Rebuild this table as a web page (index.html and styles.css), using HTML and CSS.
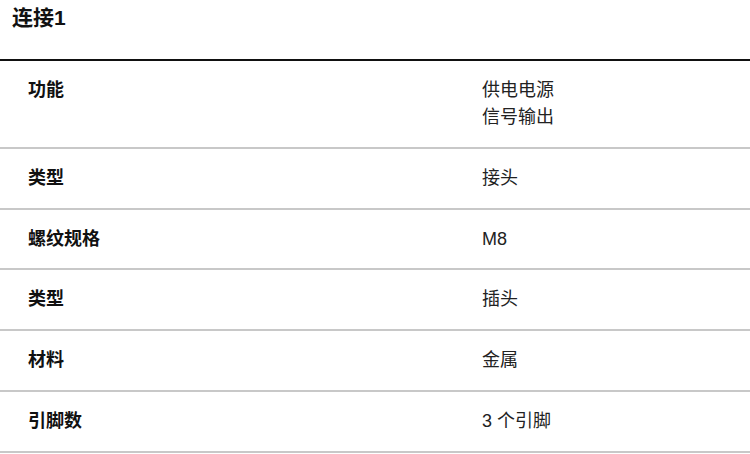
FILE: index.html
```html
<!DOCTYPE html>
<html lang="zh-CN">
<head>
<meta charset="utf-8">
<link rel="stylesheet" href="styles.css">
</head>
<body>
  <h2 class="title">连接1</h2>
  <div class="spec">
    <div class="row">
      <div class="label">功能</div>
      <div class="value">供电电源<br>信号输出</div>
    </div>
    <div class="row">
      <div class="label">类型</div>
      <div class="value">接头</div>
    </div>
    <div class="row">
      <div class="label">螺纹规格</div>
      <div class="value">M8</div>
    </div>
    <div class="row">
      <div class="label">类型</div>
      <div class="value">插头</div>
    </div>
    <div class="row">
      <div class="label">材料</div>
      <div class="value">金属</div>
    </div>
    <div class="row">
      <div class="label">引脚数</div>
      <div class="value">3 个引脚</div>
    </div>
  </div>
</body>
</html>
```

FILE: styles.css
```css
html, body {
  margin: 0;
  padding: 0;
  background: #fff;
}
body {
  font-family: "Liberation Sans", "Noto Sans CJK SC", sans-serif;
  color: #1a1a1a;
}
.title {
  margin: 0;
  height: 59px;
  box-sizing: border-box;
  padding: 4px 12px 0;
  font-size: 21px;
  line-height: 28px;
  font-weight: 700;
  color: #111;
}
.spec {
  border-top: 2px solid #111;
}
.row {
  display: grid;
  grid-template-columns: 454px 1fr;
  padding: 16px 0 16px 28px;
  border-bottom: 2px solid #c8c8c8;
  font-size: 18px;
  line-height: 27px;
}
.row:nth-child(3) {
  padding-bottom: 15px;
}
.label {
  font-weight: 700;
  color: #111;
}
.value {
  color: #222;
}
```
